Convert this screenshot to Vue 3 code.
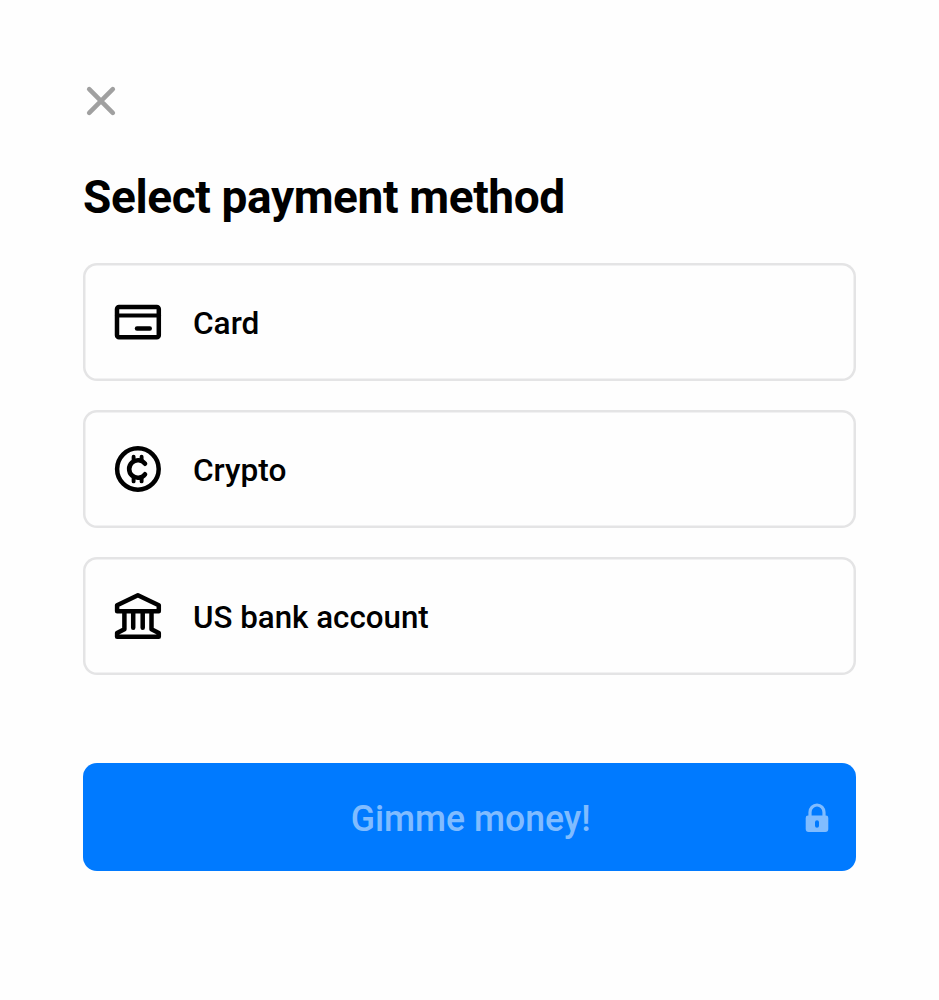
<script setup>
const methods = [
  { id: 'card', label: 'Card' },
  { id: 'crypto', label: 'Crypto' },
  { id: 'bank', label: 'US bank account' },
]
</script>

<template>
  <main class="checkout">
    <button class="close" aria-label="Close">
      <svg width="36" height="36" viewBox="0 0 36 36" fill="none" stroke="#a0a0a0" stroke-width="4.6" stroke-linecap="round">
        <path d="M6.2 6.2L29.8 29.8M29.8 6.2L6.2 29.8" />
      </svg>
    </button>
    <h1>Select payment method</h1>
    <div class="methods">
      <button v-for="m in methods" :key="m.id" class="method" :class="m.id">
        <svg class="icon" width="48" height="48" viewBox="0 0 48 48" fill="none" stroke="#000" stroke-width="4.5" stroke-linecap="round" stroke-linejoin="round">
          <template v-if="m.id === 'card'">
            <rect x="3" y="9" width="41.8" height="30.2" rx="2" />
            <path d="M3 17.5H45" stroke-width="4" />
            <path d="M23 30.5H35.8" stroke-width="4.4" />
          </template>
          <template v-else-if="m.id === 'crypto'">
            <circle cx="23.9" cy="24" r="20.8" />
            <path d="M31 18.7A8.8 8.8 0 1 0 31 29.3" stroke-width="4.6" />
            <path d="M19.6 11.8V15.5M27.6 11.8V15.5M19.6 33V36.4M27.6 33V36.4" stroke-width="3.9" />
          </template>
          <template v-else>
            <path d="M3.1 13.2L23.9 3.3L44.8 13.2V19.2H3.1Z" />
            <path d="M10.4 20V37.2L3.1 41V44.8H44.8V41L37.5 37.2V20" />
            <path d="M19.2 20V35.8M28.7 20V35.8" />
          </template>
        </svg>
        <span>{{ m.label }}</span>
      </button>
    </div>
    <button class="pay">
      <span>Gimme money!</span>
      <svg class="lock" width="24" height="30" viewBox="0 0 24 30">
        <path d="M5 14V9.3a7 7.3 0 0 1 14 0V14" fill="none" stroke="#80bcff" stroke-width="3.2" />
        <path fill="#80bcff" fill-rule="evenodd" d="M3 12.6H21Q23.3 12.6 23.3 15V26Q23.3 29 20.3 29H3.7Q.7 29 .7 26V15Q.7 12.6 3 12.6ZM12 17.3a2 2 0 0 0-2 2v3.5a2 2 0 0 0 4 0v-3.5a2 2 0 0 0-2-2Z" />
      </svg>
    </button>
  </main>
</template>

<style>
body { background: #fefefe; }
</style>

<style scoped>
.checkout {
  box-sizing: border-box;
  width: 939px;
  height: 1000px;
  padding: 83px 83px 0;
  font-family: Roboto, sans-serif;
  color: #000;
}
button {
  font: inherit;
  color: inherit;
  margin: 0;
  padding: 0;
  border: 0;
  background: none;
  box-sizing: border-box;
}
.close { display: block; width: 36px; height: 36px; }
.close svg, .icon, .lock { display: block; }
h1 {
  margin: 48px 0 0;
  height: 60px;
  line-height: 60px;
  font-size: 46px;
  font-weight: 700;
  letter-spacing: -0.38px;
  white-space: nowrap;
}
.methods { display: grid; gap: 28.5px; margin-top: 35.7px; }
.method {
  width: 773px;
  height: 118.5px;
  display: flex;
  align-items: center;
  gap: 31px;
  padding-left: 31px;
  box-shadow: inset 0 0 0 2.5px #e4e4e5;
  border-radius: 14px;
  font-size: 32px;
  font-weight: 500;
}
.method span {
  padding-top: 3px;
  transform: scaleX(0.987);
  transform-origin: left;
}
.bank span { transform: scaleX(0.978); }
.pay {
  position: relative;
  display: flex;
  align-items: center;
  justify-content: center;
  width: 772.5px;
  height: 107.5px;
  margin-top: 88px;
  border-radius: 14px;
  background: #007aff;
  color: #80bcff;
  font-size: 37px;
  font-weight: 500;
}
.pay span { padding: 3px 0 0 2px; transform: scaleX(0.962); }
.lock { position: absolute; right: 26.3px; top: 39.4px; }
</style>
